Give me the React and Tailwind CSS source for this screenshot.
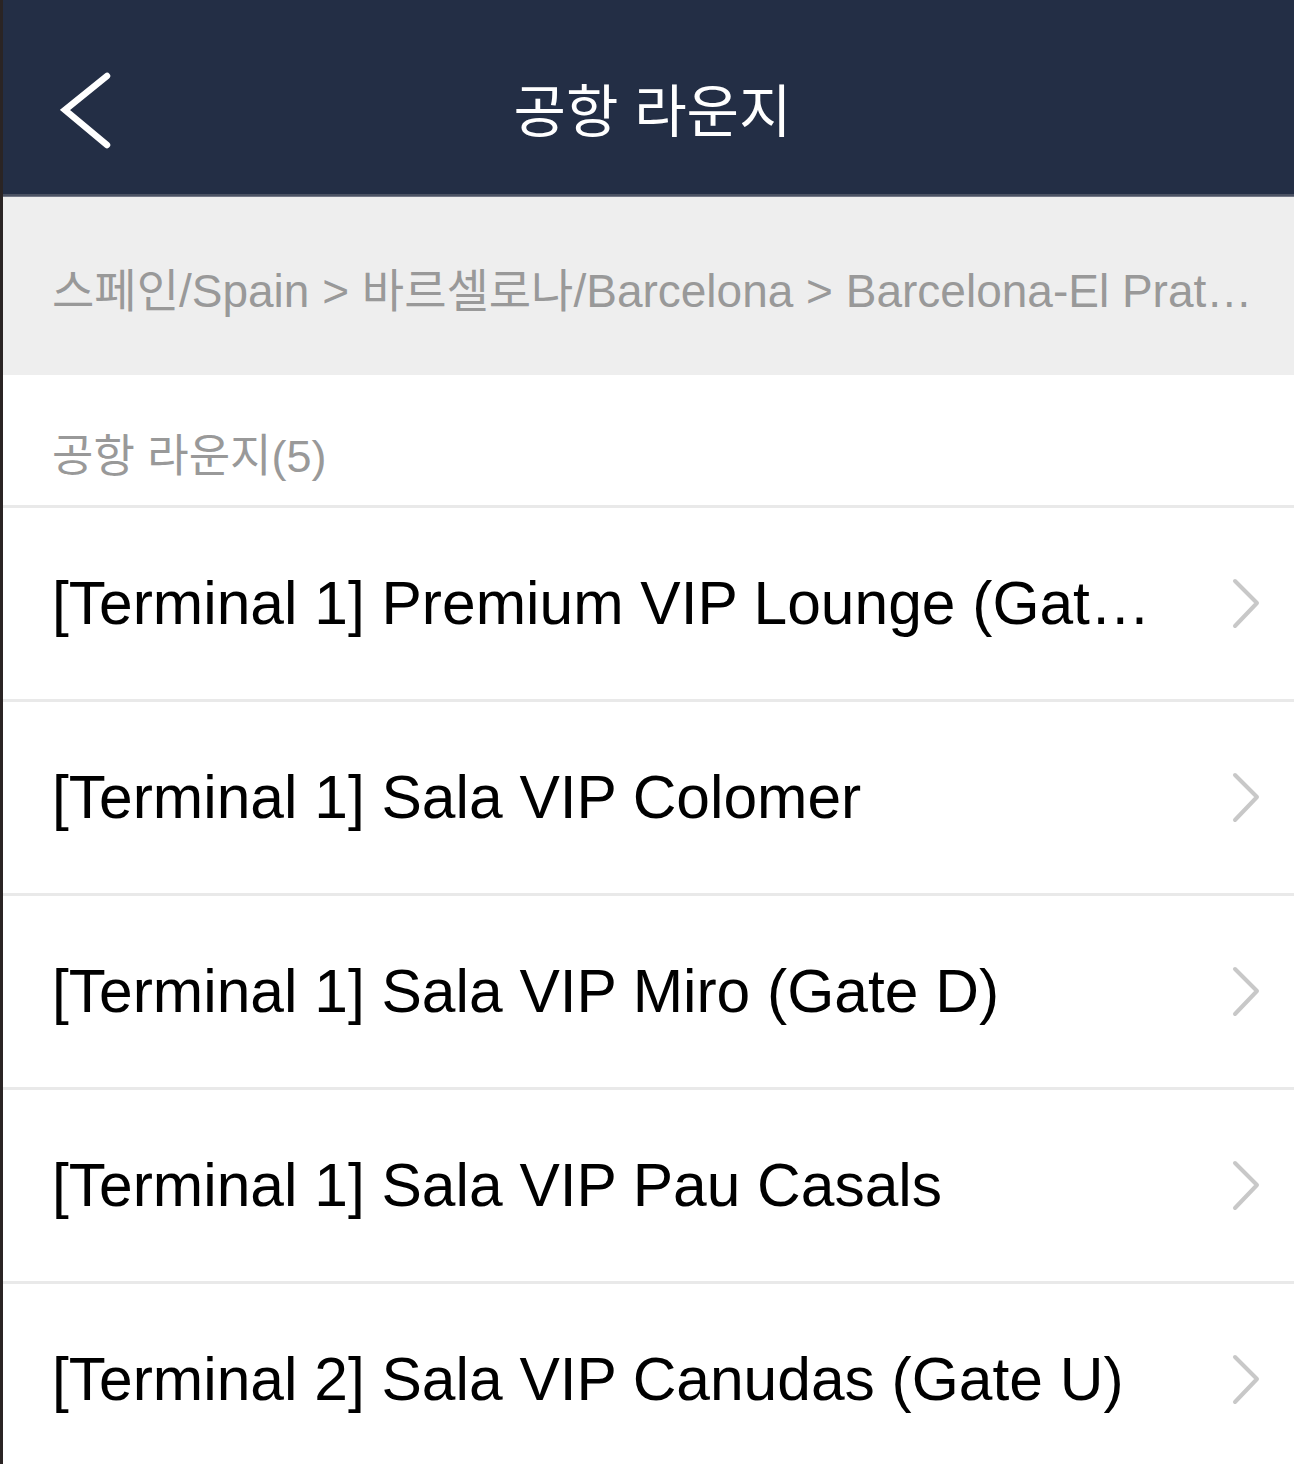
import React from "react";

const items = [
  "[Terminal 1] Premium VIP Lounge (Gate A) (Airside)",
  "[Terminal 1] Sala VIP Colomer",
  "[Terminal 1] Sala VIP Miro (Gate D)",
  "[Terminal 1] Sala VIP Pau Casals",
  "[Terminal 2] Sala VIP Canudas (Gate U)",
];

const font = { fontFamily: '"Liberation Sans", "Noto Sans CJK KR", sans-serif' };

function ChevronRight() {
  return (
    <svg width="30" height="54" viewBox="0 0 30 54" className="shrink-0">
      <polyline points="4,4 26,26 4,49" fill="none" stroke="#c8c8c8" strokeWidth="4" strokeLinecap="round" strokeLinejoin="round" />
    </svg>
  );
}

export default function App() {
  return (
    <div className="min-h-[1464px] w-[1294px] border-l-[3px] border-[#2a2424] bg-white" style={font}>
      <header className="bg-[#232e45]">
        <div className="grid h-[194px] grid-cols-[1fr_auto_1fr] items-center pt-[30px]">
          <div className="pl-[57px]">
            <svg width="52" height="80" viewBox="0 0 52 80">
              <polyline points="47,4 5,38 47,73" fill="none" stroke="#ffffff" strokeWidth="6.5" strokeLinecap="round" strokeLinejoin="miter" />
            </svg>
          </div>
          <h1 className="pl-[8px] text-[57px] leading-none text-white">공항 라운지</h1>
          <div />
        </div>
        <div className="h-[2px] bg-[#4b5263]" />
        <div className="h-[1px] bg-[#737887]" />
      </header>

      <div className="flex h-[178px] items-center bg-[#eeeeee] pl-[49px] pr-[36px] pt-[10px]">
        <p className="whitespace-nowrap text-[46px] leading-none text-[#999999]">
          스페인/Spain &gt; 바르셀로나/Barcelona &gt; Barcelona-El Prat…
        </p>
      </div>

      <div className="flex h-[133px] items-center border-b-[3px] border-[#e9e9e9] pl-[49px] pt-[32px]">
        <p className="text-[45px] leading-none text-[#999999]">공항 라운지(5)</p>
      </div>

      <ul>
        {items.map((t) => (
          <li key={t} className="flex h-[194px] items-center border-b-[3px] border-[#e9e9e9] pl-[49px] pr-[30px]">
            <span className="w-[1113px] truncate text-[60.5px] leading-[1.2] text-black">{t}</span>
            <span className="ml-[66px]">
              <ChevronRight />
            </span>
          </li>
        ))}
      </ul>
    </div>
  );
}
